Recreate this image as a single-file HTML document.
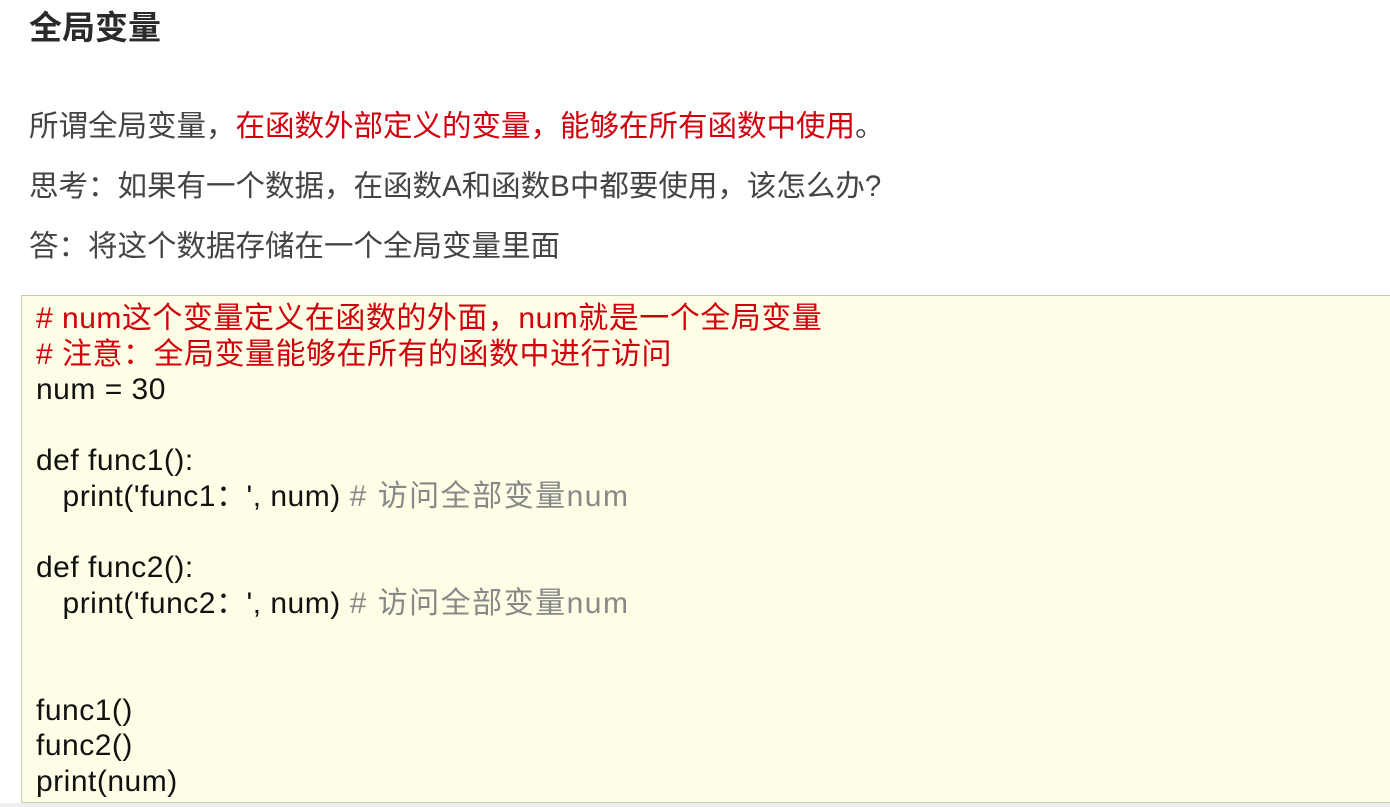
<!DOCTYPE html>
<html><head><meta charset="utf-8"><style>
body{margin:0;width:1390px;height:807px;background:#fff;overflow:hidden;font-family:"Liberation Sans","Noto Sans CJK SC",sans-serif;position:relative}
h1{position:absolute;left:29px;top:7px;margin:0;font-size:33px;font-weight:bold;color:#2a2a2a;line-height:42px}
.p{position:absolute;left:29px;font-size:29.5px;color:#444;line-height:38px;margin:0;white-space:nowrap}
.r{color:#d0000c}
.code{position:absolute;left:21px;top:295px;width:1380px;height:508px;background:#fefee6;border:1px solid #c8c8b8;box-sizing:border-box}
.code pre{margin:0;position:absolute;left:14px;top:5px;font-family:"Liberation Sans","Noto Sans CJK SC",sans-serif;font-size:30px;letter-spacing:0.5px;line-height:35.6px;color:#111}
.g{color:#888;letter-spacing:1.5px}
.bot{position:absolute;left:0;top:803px;width:1390px;height:4px;background:#eee}
</style></head><body>
<h1>全局变量</h1>
<p class="p" style="top:108px">所谓全局变量，<span class="r">在函数外部定义的变量，能够在所有函数中使用</span>。</p>
<p class="p" style="top:168px">思考：如果有一个数据，在函数A和函数B中都要使用，该怎么办?</p>
<p class="p" style="top:228px">答：将这个数据存储在一个全局变量里面</p>
<div class="code"><pre><span class="r"># num这个变量定义在函数的外面，num就是一个全局变量
# 注意：全局变量能够在所有的函数中进行访问</span>
num = 30

def func1():
   print('func1：', num) <span class="g"># 访问全部变量num</span>

def func2():
   print('func2：', num) <span class="g"># 访问全部变量num</span>


func1()
func2()
print(num)</pre></div>
<div class="bot"></div>
</body></html>
